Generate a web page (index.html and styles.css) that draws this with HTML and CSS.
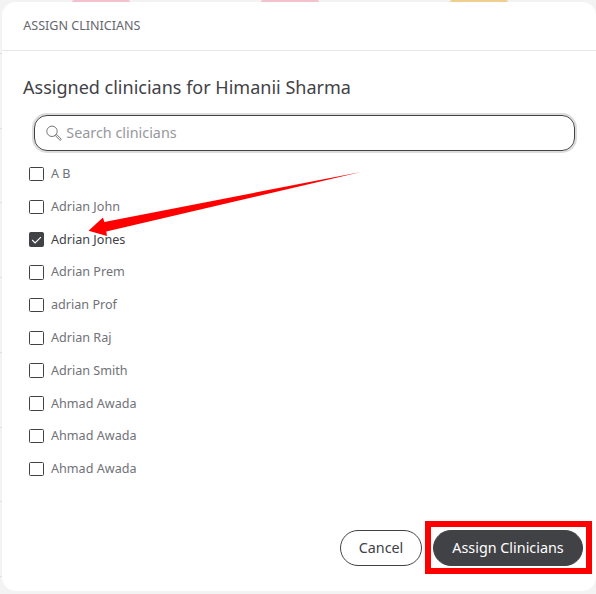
FILE: index.html
```html
<!DOCTYPE html>
<html lang="en">
<head>
<meta charset="utf-8">
<title>Assign clinicians</title>
<link rel="stylesheet" href="styles.css">
</head>
<body>
<div class="tabs"><i class="tab pink"></i><i class="tab pink"></i><i class="tab gold"></i></div>
<main class="dialog">
  <header class="header">ASSIGN CLINICIANS</header>
  <section class="content">
    <h1 class="title">Assigned clinicians for Himanii Sharma</h1>
    <div class="search">
      <svg class="search-icon" viewBox="0 0 16 17" width="16" height="17"><circle cx="6" cy="6.3" r="5.2"/><path d="M9.8 10.2 10.6 9.4 15.3 14.2 14.1 15.4 9.6 10.8Z"/></svg>
      <input class="search-input" type="text" placeholder="Search clinicians">
    </div>
    <ul class="list">
      <li class="item"><span class="box"></span><span class="name">A B</span></li>
      <li class="item"><span class="box"></span><span class="name">Adrian John</span></li>
      <li class="item selected"><span class="box"><svg viewBox="0 0 15 15" width="15" height="15"><path d="M3.2 8 6.1 10.9 11.9 5.1"/></svg></span><span class="name">Adrian Jones</span></li>
      <li class="item"><span class="box"></span><span class="name">Adrian Prem</span></li>
      <li class="item"><span class="box"></span><span class="name">adrian Prof</span></li>
      <li class="item"><span class="box"></span><span class="name">Adrian Raj</span></li>
      <li class="item"><span class="box"></span><span class="name">Adrian Smith</span></li>
      <li class="item"><span class="box"></span><span class="name">Ahmad Awada</span></li>
      <li class="item"><span class="box"></span><span class="name">Ahmad Awada</span></li>
      <li class="item"><span class="box"></span><span class="name">Ahmad Awada</span></li>
    </ul>
  </section>
  <footer class="footer">
    <button class="button cancel">Cancel</button>
    <div class="highlight"><button class="button primary">Assign Clinicians</button></div>
  </footer>
</main>
<svg class="arrow" viewBox="0 0 290 80" width="290" height="80"><path d="M8.5 65.7 23 52.5 24.3 57 281 7 26.3 66.5 27 71Z"/></svg>
</body>
</html>
```

FILE: styles.css
```css
* { box-sizing: border-box; }
body {
  margin: 0;
  width: 596px;
  height: 594px;
  overflow: hidden;
  font-family: "Noto Sans", sans-serif;
  color: #414246;
  background: #f3f3f3 repeating-linear-gradient(#f3f3f3 0 53px, #dfdfdf 53px 54px, #f3f3f3 54px 74.7px);
}
.tabs {
  display: flex;
  gap: 131px;
  height: 2px;
  padding-left: 72px;
  background: #f3f3f3;
}
.tab { width: 58px; height: 2px; border-radius: 2px 2px 0 0; }
.pink { background: #f2c1cd; }
.gold { background: #f0ce91; }
.dialog {
  display: flex;
  flex-direction: column;
  margin-left: 2px;
  width: 594px;
  height: 589px;
  border-radius: 14px;
  background: #fff;
}
.header {
  height: 49px;
  padding-left: 21.3px;
  border-bottom: 1px solid #e8e8e8;
  font-size: 12.55px;
  line-height: 47px;
  color: #66676c;
}
.content { padding: 23px 21px 0; }
.title {
  margin: 0;
  font-size: 18.03px;
  font-weight: 400;
  line-height: 26px;
}
.search {
  display: flex;
  align-items: center;
  gap: 4.3px;
  width: 541px;
  height: 36px;
  margin: 15px 0 0 11px;
  padding-left: 11px;
  border: 1px solid #414246;
  border-radius: 13px;
  box-shadow: 0 0 0 2px #dcdcdc;
}
.search-icon { fill: none; stroke: #66676b; stroke-width: .9; }
.search-input {
  width: 420px;
  padding: 0;
  border: 0;
  outline: 0;
  background: none;
  font: 14.35px/20px "Noto Sans", sans-serif;
}
.search-input::placeholder { color: #97989d; opacity: 1; }
.list { margin: 6.7px 0 0 6px; padding: 0; list-style: none; }
.item {
  display: flex;
  align-items: center;
  gap: 7px;
  height: 32.78px;
  font-size: 12.6px;
  color: #717277;
}
.name { margin-top: -.8px; }
.selected { color: #414246; }
.box {
  width: 15px;
  height: 14.5px;
  border: 1px solid #414246;
  border-radius: 1.5px;
}
.box svg {
  display: block;
  margin: -1px;
  fill: none;
  stroke: #fff;
  stroke-width: 1.1;
}
.selected .box { background: #414246; }
.footer {
  display: flex;
  align-items: center;
  gap: 3px;
  margin: auto 4px 17px auto;
}
.button {
  height: 36px;
  padding: 0;
  border: 1px solid #414246;
  border-radius: 18px;
  font: 14.35px/20px "Noto Sans", sans-serif;
}
.cancel { width: 82px; background: #fff; color: #414246; }
.primary { width: 150px; background: #414246; color: #fff; }
.highlight {
  display: flex;
  align-items: center;
  padding-left: 2px;
  width: 167px;
  height: 53px;
  border: 6px solid #f00;
}
.arrow { position: absolute; left: 80px; top: 165px; fill: #f00; }
```
